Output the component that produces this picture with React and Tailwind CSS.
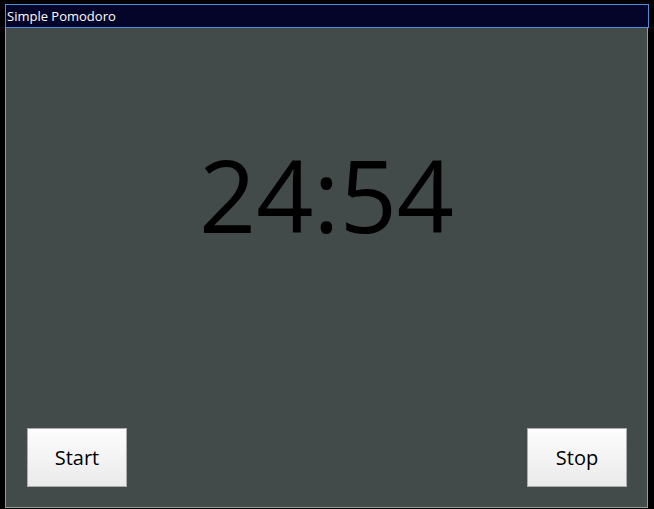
export default function App() {
  return (
    <div className="w-[654px] h-[509px] bg-black overflow-hidden pt-[4px] pl-[5px]" style={{ fontFamily: '"Open Sans", "Noto Sans", sans-serif' }}>
      <div className="w-[644px] h-[504px] flex flex-col">
        {/* Title bar */}
        <div className="h-[24px] bg-[#05052a] border border-[#4a90d9] flex items-center pl-[1px]">
          <span className="text-[13px] leading-none text-white">Simple Pomodoro</span>
        </div>
        {/* Body */}
        <div className="flex-1 bg-[#434b4a] border-l border-r border-b border-[#9a9a9a] flex flex-col mr-[1px]">
          <div className="flex-1 flex justify-center pt-[116px]">
            <span className="text-[100px] leading-none text-black">24:54</span>
          </div>
          <div className="flex justify-between pl-[21px] pr-[20px] pb-[20px]">
            <button className="w-[100px] h-[59px] border border-[#ababab] bg-gradient-to-b from-[#fdfdfd] to-[#eaeaea] text-[20px] text-black">Start</button>
            <button className="w-[100px] h-[59px] border border-[#ababab] bg-gradient-to-b from-[#fdfdfd] to-[#eaeaea] text-[20px] text-black">Stop</button>
          </div>
        </div>
      </div>
    </div>
  )
}
